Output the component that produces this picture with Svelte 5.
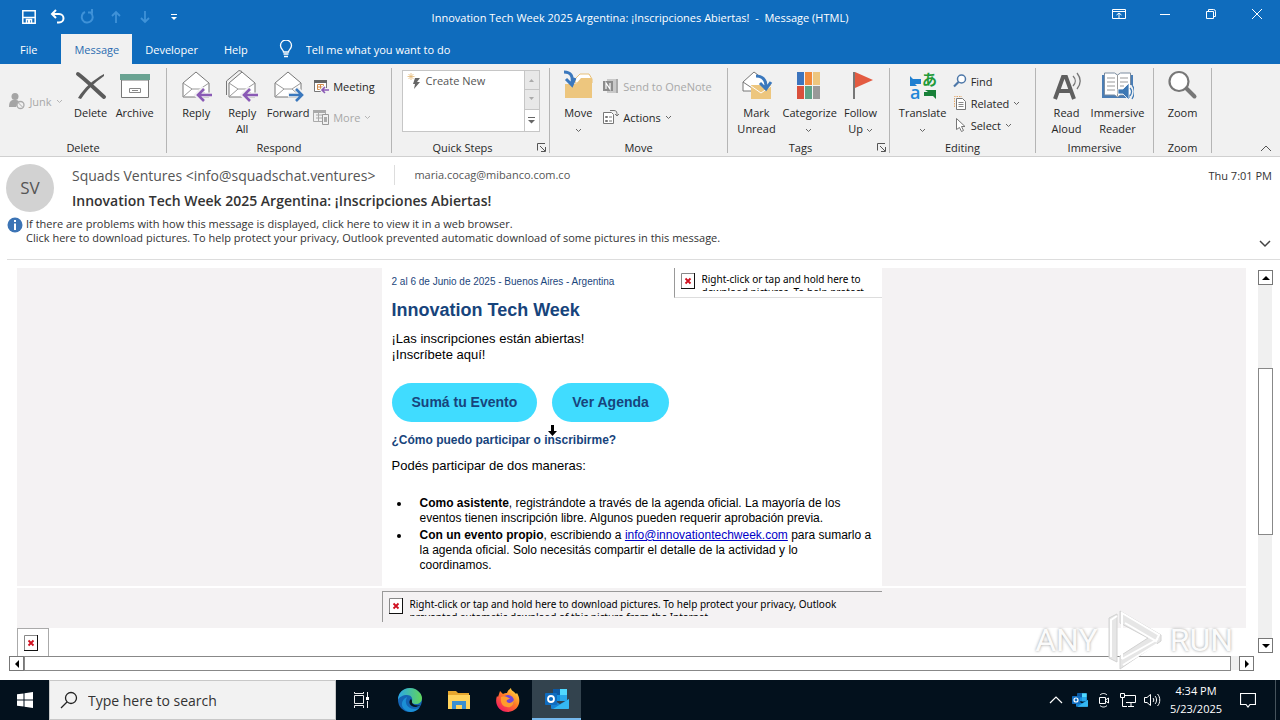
<script lang="ts">
  const tabs = ["File", "Message", "Developer", "Help"];
  let activeTab = $state("Message");
  let tellMe = $state("");
  let query = $state("");

  const message = {
    initials: "SV",
    from: "Squads Ventures <info@squadschat.ventures>",
    to: "maria.cocag@mibanco.com.co",
    subject: "Innovation Tech Week 2025 Argentina: ¡Inscripciones Abiertas!",
    received: "Thu 7:01 PM",
  };
</script>

{#snippet caret()}
  <svg class="caret" width="7" height="5" viewBox="0 0 7 5"><path d="M1 1l2.5 2.5L6 1" fill="none" stroke="currentColor" /></svg>
{/snippet}

{#snippet launcher()}
  <svg class="launcher" width="9" height="9" viewBox="0 0 9 9"><path d="M.5 7.500V.5H8M3 3l5 5M8.500 4v4.500H4" fill="none" stroke="#555" /></svg>
{/snippet}

{#snippet broken()}
  <svg class="broken" width="14" height="16" viewBox="0 0 14 16">
    <path d="M.5 15V.5H13" fill="none" stroke="#888" />
    <path d="M1 1h12v14H1z" fill="#fff" />
    <path d="M0 15.500h14M13.500 0v16" stroke="#111" />
    <path d="M4.500 5.500l5 5M9.500 5.500l-5 5" stroke="#d01020" stroke-width="1.800" />
  </svg>
{/snippet}

{#snippet outlook(size: number)}
  <svg width={size} height={size} viewBox="0 0 24 24">
    <path d="M8 2h14v12H8z" fill="#1490df" /><path d="M15 2h7v6h-7z" fill="#50d9ff" /><path d="M8 2h7v6H8z" fill="#0c59a4" />
    <path d="M15 8h7v6h-7z" fill="#28a8ea" /><path d="M6 12l9 5 9-5v9a1 1 0 0 1-1 1H7a1 1 0 0 1-1-1z" fill="#1683d3" /><path d="M24 12v9a1 1 0 0 1-1 1H8z" fill="#35b8f1" />
    <rect y="6" width="12" height="12" rx="1" fill="#0f6cbf" /><circle cx="6" cy="12" r="3" fill="none" stroke="#fff" stroke-width="1.800" />
  </svg>
{/snippet}

{#snippet envelope()}
  <path d="M3 13L16 2l13 11v14H3z" fill="#fff" stroke="#777" /><path d="M3 13l9 6h8l9-6M4 26l8-7M28 26l-8-7" fill="none" stroke="#999" />
{/snippet}

<div class="window">
  <header class="titlebar">
    <div class="quick">
      <button aria-label="Save"><svg width="16" height="16" viewBox="0 0 16 16"><path d="M1.800 1.800h12.400v12.400H1.800zM2 8.500h12M5.500 14v-3.500h5V14" fill="none" stroke="#fff" stroke-width="1.500" /><path d="M7 11h2v3H7z" fill="#fff" /></svg></button>
      <button aria-label="Undo"><svg width="16" height="16" viewBox="0 0 16 16"><path d="M6 1L2 5l4 4M2.500 5H9c6 0 6 8.500 0 8.500H7" fill="none" stroke="#fff" stroke-width="2" /></svg></button>
      <button class="dim" aria-label="Redo"><svg width="16" height="16" viewBox="0 0 16 16"><path d="M9 3.500h4V0M12 4a5.500 5.500 0 1 1-6-1" fill="none" stroke="currentColor" stroke-width="2" /></svg></button>
      <button class="dim" aria-label="Previous item"><svg width="16" height="16" viewBox="0 0 16 16"><path d="M8 14V3M4 7l4-4 4 4" fill="none" stroke="currentColor" stroke-width="1.800" /></svg></button>
      <button class="dim" aria-label="Next item"><svg width="16" height="16" viewBox="0 0 16 16"><path d="M8 2v11M4 9l4 4 4-4" fill="none" stroke="currentColor" stroke-width="1.800" /></svg></button>
      <button aria-label="Customize toolbar"><svg width="16" height="16" viewBox="0 0 16 16"><path d="M5 5.500h6" stroke="#fff" /><path d="M5 8h6l-3 3z" fill="#fff" /></svg></button>
    </div>
    <h1>{message.subject}&nbsp; -&nbsp; Message (HTML)</h1>
    <div class="controls">
      <button aria-label="Ribbon display options"><svg width="14" height="12" viewBox="0 0 14 12"><path d="M.5 1.500h13v9H.5zM.5 3.500h13M7 10V5M4.500 7L7 5l2.500 2" fill="none" stroke="#fff" /></svg></button>
      <button aria-label="Minimize"><svg width="12" height="12" viewBox="0 0 12 12"><path d="M1 6.500h10" stroke="#fff" /></svg></button>
      <button aria-label="Restore"><svg width="12" height="12" viewBox="0 0 12 12"><path d="M1.500 3.500h7v7h-7zM3.500 3V1.500h5a2 2 0 0 1 2 2v5H9" fill="none" stroke="#fff" /></svg></button>
      <button aria-label="Close"><svg width="12" height="12" viewBox="0 0 12 12"><path d="M1 1l10 10M11 1L1 11" stroke="#fff" /></svg></button>
    </div>
  </header>

  <nav class="tabs">
    {#each tabs as tab}
      <button class:active={tab === activeTab} onclick={() => (activeTab = tab)}>{tab}</button>
    {/each}
    <label class="tell">
      <svg width="14" height="18" viewBox="0 0 14 18"><path d="M4.500 12c0-2-3-3-3-6.500a5.500 5.500 0 0 1 11 0c0 3.500-3 4.500-3 6.500zM4.500 14h5M5 16.500h4" fill="none" stroke="#fff" stroke-width="1.300" /></svg>
      <input bind:value={tellMe} placeholder="Tell me what you want to do" aria-label="Tell me what you want to do" />
    </label>
  </nav>

  <div class="ribbon">
    <section>
      <div class="tools">
        <button class="small junk" disabled>
          <svg width="16" height="18" viewBox="0 0 16 18"><circle cx="6" cy="4.500" r="3.500" fill="#a5a5a5" /><path d="M0 15c0-7 3-7 6-7 2 0 3 0 4 2l-3 5z" fill="#a5a5a5" /><circle cx="11.500" cy="13" r="3.500" fill="#f1f1f1" stroke="#aaa" stroke-width="1.300" /><path d="M9 10.500l5 5" stroke="#aaa" /></svg>
          Junk {@render caret()}
        </button>
        <button class="big w44">
          <svg width="32" height="32" viewBox="0 0 32 32"><path d="M3 4c8 6 16 14 26 23" fill="none" stroke="#5b5b5b" stroke-width="4" stroke-linecap="round" /><path d="M29 4C18 10 9 18 3 28l3 1C12 20 19 13 29 6z" fill="#5b5b5b" /></svg>
          Delete
        </button>
        <button class="big w44">
          <svg width="32" height="32" viewBox="0 0 32 32"><path d="M2.500 10h27v17.500h-27z" fill="#fff" stroke="#777" /><path d="M1 4h30v6H1z" fill="#6aa392" /><path d="M10.500 18.500h11v4h-11zM13 20.500h6" fill="none" stroke="#888" /></svg>
          Archive
        </button>
      </div>
      <h2>Delete</h2>
    </section>

    <section>
      <div class="tools">
        <button class="big w46">
          <svg width="32" height="32" viewBox="0 0 32 32">{@render envelope()}<path d="M32 25H18M24 18l-7 7 7 7" fill="none" stroke="#f1f1f1" stroke-width="5" /><path d="M32 25H18M24 19l-6 6 6 6" fill="none" stroke="#8a5ab5" stroke-width="2.600" /></svg>
          Reply
        </button>
        <button class="big w46">
          <svg width="32" height="32" viewBox="0 0 32 32"><path d="M.5 25V11L13 .5l3 1" fill="none" stroke="#777" />{@render envelope()}<path d="M32 25H18M24 18l-7 7 7 7" fill="none" stroke="#f1f1f1" stroke-width="5" /><path d="M32 25H18M24 19l-6 6 6 6" fill="none" stroke="#8a5ab5" stroke-width="2.600" /></svg>
          Reply<br />All
        </button>
        <button class="big w46">
          <svg width="32" height="32" viewBox="0 0 32 32">{@render envelope()}<path d="M16 25h14M24 18l7 7-7 7" fill="none" stroke="#f1f1f1" stroke-width="5" /><path d="M17 25h13M24 19l6 6-6 6" fill="none" stroke="#3b78bd" stroke-width="2.600" /></svg>
          Forward
        </button>
        <div class="stack two">
          <button class="small">
            <svg width="16" height="16" viewBox="0 0 16 16"><path d="M1.500 2.500h12v11h-12z" fill="#fff" stroke="#777" /><path d="M1 2h13v3H1z" fill="#666" /><path d="M4.500 6.500h6v5h-6zM7.500 6v6M4 9h7" fill="none" stroke="#d38b4a" /><path d="M16 12H9M12 9l-3 3 3 3" fill="none" stroke="#f1f1f1" stroke-width="4" /><path d="M16 12H9M12 9l-3 3 3 3" fill="none" stroke="#8a5ab5" stroke-width="1.600" /></svg>
            Meeting
          </button>
          <button class="small" disabled>
            <svg width="16" height="16" viewBox="0 0 16 16"><path d="M.5 1.500h12v11H.5zM3 6h7M3 9h7M5.500 4v8" fill="none" stroke="#aaa" /><path d="M0 1h13v3H0z" fill="#aaa" /><path d="M9.500 5.500h6v10h-6z" fill="#f1f1f1" stroke="#999" /><path d="M11 8h3v5h-3z" fill="#aaa" /></svg>
            More {@render caret()}
          </button>
        </div>
      </div>
      <h2>Respond</h2>
    </section>

    <section class="launch">
      <div class="tools">
        <div class="gallery">
          <button class="create">
            <svg width="16" height="18" viewBox="0 0 16 18"><path d="M8 5h5l-3 4h3l-6 7 1-5H6z" fill="#666" /><path d="M4 0v7M.5 3.500h7M1.500 1l5 5M6.500 1l-5 5" stroke="#e3b977" stroke-width=".8" /></svg>
            Create New
          </button>
          <div class="spin">
            <button aria-label="Previous row" disabled><svg width="7" height="4" viewBox="0 0 7 4"><path d="M1 4h5L3.500 1z" fill="#aaa" /></svg></button>
            <button aria-label="Next row" disabled><svg width="7" height="4" viewBox="0 0 7 4"><path d="M1 0h5L3.500 3z" fill="#aaa" /></svg></button>
            <button aria-label="More quick steps"><svg width="7" height="7" viewBox="0 0 7 7"><path d="M0 .5h7" stroke="#666" /><path d="M0 3h7L3.500 6.500z" fill="#666" /></svg></button>
          </div>
        </div>
      </div>
      <h2>Quick Steps</h2>
      {@render launcher()}
    </section>

    <section>
      <div class="tools">
        <button class="big w46">
          <svg width="32" height="32" viewBox="0 0 32 32"><path d="M13 9l5-5h9l3 5v4H13z" fill="#fff" stroke="#e7bf78" /><path d="M3 14h11l5-6h11v20H3z" fill="#edc67e" /><path d="M2 2c7 0 9 4 8 11M4 9l6 6 3-7" fill="none" stroke="#3b78bd" stroke-width="3" /></svg>
          Move<br />{@render caret()}
        </button>
        <div class="stack two">
          <button class="small" disabled>
            <svg width="16" height="16" viewBox="0 0 16 16"><path d="M4 1h11v14H4z" fill="#c9c9c9" /><path d="M13 1h2v14h-2z" fill="#aaa" /><path d="M0 3h10v10H0z" fill="#8c8c8c" /><path d="M3 11V5l4 6V5" fill="none" stroke="#fff" stroke-width="1.200" /></svg>
            Send to OneNote
          </button>
          <button class="small">
            <svg width="16" height="16" viewBox="0 0 16 16"><path d="M.5 3.500h8l2 2v9H.5z" fill="#fff" stroke="#777" /><path d="M2.500 7.500h2v1h-2zM6 8h3M2.500 11.500h2v1h-2zM6 12h3M7 1.500h4c3 0 3 2 3 5M12 5l2 2 2-2" fill="none" stroke="#777" /></svg>
            Actions {@render caret()}
          </button>
        </div>
      </div>
      <h2>Move</h2>
    </section>

    <section class="launch">
      <div class="tools">
        <button class="big w52">
          <svg width="32" height="32" viewBox="0 0 32 32"><path d="M2 12L13 2l12 9v10H2z" fill="#fff" stroke="#777" /><path d="M2 12l9 6" stroke="#777" /><path d="M10 15h20v14H10z" fill="#edc67e" /><path d="M10 16l10 7 10-7" fill="none" stroke="#fff" /><path d="M15 6c7 0 10 4 10 11M19 13l6 6 5-7" fill="none" stroke="#3b78bd" stroke-width="3" /></svg>
          Mark<br />Unread
        </button>
        <button class="big w52">
          <svg width="32" height="32" viewBox="0 0 32 32"><path d="M4 2h7v13H4z" fill="#3c74bd" /><path d="M12 2h7v13h-7z" fill="#f0893b" /><path d="M20 2h7v13h-7z" fill="#edc67e" /><path d="M4 16h7v13H4z" fill="#d9503c" /><path d="M12 16h7v13h-7z" fill="#5fa287" /><path d="M20 16h7v13h-7z" fill="#999" /></svg>
          Categorize<br />{@render caret()}
        </button>
        <button class="big w52">
          <svg width="32" height="32" viewBox="0 0 32 32"><path d="M9 2v27" stroke="#777" stroke-width="2" /><path d="M10 2l18 8-18 8z" fill="#e35b41" /></svg>
          Follow<br />Up {@render caret()}
        </button>
      </div>
      <h2>Tags</h2>
      {@render launcher()}
    </section>

    <section>
      <div class="tools">
        <button class="big w56">
          <svg class="open" width="32" height="32" viewBox="0 0 32 32">
            <path d="M3 6l3 3h8v5H8l2 2H3z" fill="#1f7fd0" /><path d="M18 20h11v9l-3-3h-9v-4h4z" fill="#188038" />
            <text x="3" y="29" font-size="18" font-weight="600" fill="#1f87d8">a</text>
            <text x="15" y="15" font-size="15" font-weight="700" fill="#219a38" font-family="Noto Sans CJK JP, sans-serif">あ</text>
          </svg>
          Translate<br />{@render caret()}
        </button>
        <div class="stack">
          <button class="small">
            <svg width="14" height="16" viewBox="0 0 14 16"><circle cx="8.500" cy="6" r="4" fill="#fff" stroke="#4d77a8" stroke-width="1.500" /><path d="M5.500 9L1 13.500" stroke="#4d77a8" stroke-width="2.200" /></svg>
            Find
          </button>
          <button class="small">
            <svg width="14" height="16" viewBox="0 0 14 16"><path d="M1.500 12V1.500H9" fill="none" stroke="#e3a769" stroke-dasharray="1.500 1" /><path d="M3.500 3.500h6l3 3v8h-9z" fill="#fff" stroke="#777" /><path d="M5.500 7.500h5M5.500 9.500h5M5.500 11.500h5" stroke="#888" /></svg>
            Related {@render caret()}
          </button>
          <button class="small">
            <svg width="14" height="16" viewBox="0 0 14 16"><path d="M3.500 1.500v11l3-2 2 4 2-1-2-4h3.500z" fill="#fff" stroke="#777" /></svg>
            Select {@render caret()}
          </button>
        </div>
      </div>
      <h2>Editing</h2>
    </section>

    <section>
      <div class="tools">
        <button class="big w46">
          <svg width="32" height="32" viewBox="0 0 32 32"><path d="M4 29l8-22h3l8 22M7 21h13" fill="none" stroke="#5f5f5f" stroke-width="4" /><path d="M22 6c3 3 3 7 0 10M26 3c4 5 4 11 0 16" fill="none" stroke="#777" stroke-width="1.300" /></svg>
          Read<br />Aloud
        </button>
        <button class="big w56">
          <svg width="32" height="32" viewBox="0 0 32 32"><path d="M0 5h31v23H0z" fill="#4a7db5" /><path d="M2.500 3h10l3 2 3-2h10v22h-10l-3 2-3-2h-10z" fill="#fff" stroke="#7a8ca0" /><path d="M15.500 5v21M5 8h8M5 12h8M5 16h8M5 20h8M18 8h8M18 12h8M18 16h4" stroke="#999" /><path d="M16 19h5l6-6v17l-6-6h-5z" fill="#3d78b4" stroke="#fff" stroke-width=".8" /><path d="M28 15h4v14h-4z" fill="#f1f1f1" /><path d="M28 18c2 2 2 5 0 8M30 15c3 4 3 9 0 14" fill="none" stroke="#3d78b4" stroke-width="1.200" /></svg>
          Immersive<br />Reader
        </button>
      </div>
      <h2>Immersive</h2>
    </section>

    <section>
      <div class="tools">
        <button class="big w56">
          <svg width="32" height="32" viewBox="0 0 32 32"><circle cx="12" cy="11.500" r="9.500" fill="#fff" stroke="#777" stroke-width="2.200" /><path d="M19.500 18.500l8 8" stroke="#777" stroke-width="4" stroke-linecap="round" /></svg>
          Zoom
        </button>
      </div>
      <h2>Zoom</h2>
    </section>
    <button class="collapse" aria-label="Collapse ribbon"><svg width="12" height="7" viewBox="0 0 12 7"><path d="M1 6l5-5 5 5" fill="none" stroke="#555" /></svg></button>
  </div>

  <div class="head">
    <div class="avatar">{message.initials}</div>
    <div class="who">
      <div class="from"><span>{message.from}</span><small>{message.to}</small></div>
      <h3>{message.subject}</h3>
    </div>
    <time>{message.received}</time>
  </div>
  <div class="info">
    <svg width="16" height="16" viewBox="0 0 16 16"><circle cx="8" cy="8" r="7.500" fill="#3c74b5" /><path d="M7 3h2v2H7zM7 6.500h2V13H7z" fill="#fff" /></svg>
    <p>
      If there are problems with how this message is displayed, click here to view it in a web browser.<br />
      Click here to download pictures. To help protect your privacy, Outlook prevented automatic download of some pictures in this message.
    </p>
    <button aria-label="Expand header"><svg width="12" height="8" viewBox="0 0 12 8"><path d="M1 1l5 5 5-5" fill="none" stroke="#444" stroke-width="1.500" /></svg></button>
  </div>

  <main>
    <div class="view">
      <div class="mail">
        <article>
          <div class="blocked top">{@render broken()}<p>Right-click or tap and hold here to download pictures. To help protect</p></div>
          <p class="date">2 al 6 de Junio de 2025 - Buenos Aires - Argentina</p>
          <h4>Innovation Tech Week</h4>
          <p class="lead">¡Las inscripciones están abiertas!<br />¡Inscríbete aquí!</p>
          <div class="actions">
            <a href="#evento">Sumá tu Evento</a>
            <a href="#agenda">Ver Agenda</a>
            <svg class="pointer" width="9" height="11" viewBox="0 0 9 11"><path d="M3 0h3v6h3L4.500 11 0 6h3z" /></svg>
          </div>
          <h5>¿Cómo puedo participar o inscribirme?</h5>
          <p class="lead">Podés participar de dos maneras:</p>
          <ul>
            <li><b>Como asistente</b>, registrándote a través de la agenda oficial. La mayoría de los<br />eventos tienen inscripción libre. Algunos pueden requerir aprobación previa.</li>
            <li><b>Con un evento propio</b>, escribiendo a <a href="mailto:info@innovationtechweek.com">info@innovationtechweek.com</a> para sumarlo a<br />la agenda oficial. Solo necesitás compartir el detalle de la actividad y lo<br />coordinamos.</li>
          </ul>
        </article>
      </div>
      <div class="mail footer">
        <div class="blocked">{@render broken()}<p>Right-click or tap and hold here to download pictures. To help protect your privacy, Outlook prevented automatic download of this picture from the Internet.</p></div>
      </div>
      <div class="pixel">{@render broken()}</div>
    </div>
    <div class="vbar">
      <button aria-label="Scroll up"><svg width="8" height="4" viewBox="0 0 8 4"><path d="M0 4h8L4 0z" /></svg></button>
      <div class="track"><div class="thumb"></div></div>
      <button aria-label="Scroll down"><svg width="8" height="4" viewBox="0 0 8 4"><path d="M0 0h8L4 4z" /></svg></button>
    </div>
    <div class="hbar">
      <button aria-label="Scroll left"><svg width="4" height="8" viewBox="0 0 4 8"><path d="M4 0v8L0 4z" /></svg></button>
      <div class="thumb"></div>
      <button aria-label="Scroll right"><svg width="4" height="8" viewBox="0 0 4 8"><path d="M0 0v8l4-4z" /></svg></button>
    </div>
    <div class="watermark">
      <span>ANY</span>
      <svg width="58" height="62" viewBox="0 0 58 62"><path d="M4 9l8-4v48l-8-4zM15 2l41 24v6L15 60V47l28-18-28-15z" fill="#e6e6e6" stroke="#d2d2d2" /><path d="M6 48V11l6-4M17 50V4l37 22-3 6-31-18M17 50l36-20M18 56l34-21" fill="none" stroke="#fff" stroke-width="2" /><path d="M19 20l20 10-20 13z" fill="#fff" /></svg>
      <span>RUN</span>
    </div>
  </main>

  <footer class="taskbar">
    <button aria-label="Start"><svg width="16" height="16" viewBox="0 0 16 16"><path d="M0 2.300L6.500 1.400V7.500H0zM7.500 1.200L16 0v7.500H7.500zM0 8.500h6.500v6.100L0 13.700zM7.500 8.500H16V16l-8.500-1.200z" fill="#fff" /></svg></button>
    <label class="search">
      <svg width="18" height="18" viewBox="0 0 18 18"><circle cx="11" cy="7" r="5.500" fill="none" stroke="#222" stroke-width="1.300" /><path d="M7 11l-6 6" stroke="#222" stroke-width="1.300" /></svg>
      <input bind:value={query} placeholder="Type here to search" aria-label="Type here to search" />
    </label>
    <button aria-label="Task view"><svg width="18" height="18" viewBox="0 0 18 18"><path d="M2.500 4.500h9v8h-9zM2.500 1v1.500h9V1M2.500 17v-2.500h9V17M15.500 1v5M15.500 10v7" fill="none" stroke="#eee" /><path d="M14 6h3v3h-3z" fill="#fff" /></svg></button>
    <button aria-label="Edge">
      <svg width="24" height="24" viewBox="0 0 24 24">
        <defs><linearGradient id="edge-a" x2="1"><stop stop-color="#2aa7e8" /><stop offset="1" stop-color="#62d65a" /></linearGradient></defs>
        <circle cx="12" cy="12" r="12" fill="#1464b4" /><path d="M0 12C0 4 6 0 12 0s12 5 12 10c0 4-3 6-6 6-3 0-5-1-4-3 1-3-1-6-5-6-4 0-8 2-9 5z" fill="url(#edge-a)" />
        <path d="M8 12c-1 5 3 9 9 9 2 0 4-1 5-2-3 5-11 7-16 2-4-4-2-10 3-12z" fill="#1b8fd6" /><path d="M13 11c-3 2-2 8 5 8l5-2c-4 1-9 0-9-3 0-1 0-2-1-3z" fill="#06131f" />
      </svg>
    </button>
    <button aria-label="File Explorer"><svg width="22" height="20" viewBox="0 0 22 20"><path d="M0 1h8l2 2h11v16H0z" fill="#e6a72e" /><path d="M0 5h22v14H0z" fill="#ffd35c" /><path d="M4 19v-8h14v8h-4v-4H8v4z" fill="#3a8fd0" /></svg></button>
    <button aria-label="Firefox">
      <svg width="24" height="24" viewBox="0 0 24 24">
        <defs><linearGradient id="fox" x1="1" x2=".2" y2="1"><stop stop-color="#fff04a" /><stop offset=".5" stop-color="#ff7b24" /><stop offset="1" stop-color="#f31464" /></linearGradient></defs>
        <path d="M4 3l3 3c1-1 3-1 4-1 1-3 3-4 4-5 0 3 3 3 5 6l1-1c5 8 2 18-9 19C3 24-2 16 1 8l1 1z" fill="url(#fox)" /><circle cx="12" cy="13" r="6" fill="#7046d8" /><path d="M5 9c4-2 7 0 9 2-3 0-4 2-3 3 2 2 5 1 7-2 0 6-4 8-7 7-4 0-7-4-6-10z" fill="#ff9b2c" />
      </svg>
    </button>
    <button class="running" aria-label="Outlook">{@render outlook(24)}</button>
    <div class="tray">
      <button aria-label="Show hidden icons"><svg width="14" height="8" viewBox="0 0 14 8"><path d="M1 7l6-6 6 6" fill="none" stroke="#fff" stroke-width="1.200" /></svg></button>
      <button aria-label="Outlook status">{@render outlook(16)}</button>
      <button aria-label="Meet now"><svg width="14" height="16" viewBox="0 0 14 16"><path d="M2.500 5.500h6v6h-6zM8.500 8l3-2v5l-3-2M3 3c2-2 5-2 7 0M3 13.500c2 2 5 2 7 0" fill="none" stroke="#fff" /></svg></button>
      <button aria-label="Network"><svg width="16" height="14" viewBox="0 0 16 14"><path d="M5 2.500h10.500v7H6M11 10v3M8 13.500h6M.5 .5h4v4h-4zM2.500 5v8.500H7" fill="none" stroke="#fff" /></svg></button>
      <button aria-label="Volume"><svg width="17" height="14" viewBox="0 0 17 14"><path d="M.5 4.500H3l3.500-3v11L3 9.500H.5zM9 5c1 1 1 3 0 4M11 3c2 2 2 6 0 8M13.500 1c3 3 3 9 0 12" fill="none" stroke="#fff" /></svg></button>
      <div class="clock">4:34 PM<br />5/23/2025</div>
      <button class="notes" aria-label="Notifications"><svg width="16" height="16" viewBox="0 0 16 16"><path d="M.5 1.500h15v11H10L8 15l-2-2.500H.5z" fill="none" stroke="#fff" stroke-width="1.200" /></svg></button>
    </div>
  </footer>
</div>

<style>
  :global(body) {
    margin: 0;
  }
  .window {
    display: flex;
    flex-direction: column;
    height: 100vh;
    min-height: 600px;
    overflow: hidden;
    background: #fff;
    color: #333;
    font-family: "Open Sans", "Noto Sans", sans-serif;
    font-size: 11px;
  }
  h1,
  h2,
  h3,
  h4,
  h5,
  p,
  ul {
    margin: 0;
    padding: 0;
    font-weight: 400;
  }
  button,
  input {
    padding: 0;
    border: none;
    background: none;
    color: inherit;
    font: inherit;
  }
  svg {
    flex-shrink: 0;
  }

  .titlebar {
    display: grid;
    grid-template-columns: 1fr auto 1fr;
    align-items: center;
    height: 34px;
    background: #0f6cbd;
    color: #fff;
  }
  .quick {
    display: flex;
    gap: 13px;
    padding-left: 21px;
  }
  .quick button {
    display: flex;
  }
  .dim {
    color: #3f92d8;
  }
  h1 {
    font-size: 11px;
  }
  .controls {
    display: flex;
    justify-content: flex-end;
    height: 30px;
    align-self: start;
  }
  .controls button {
    width: 46px;
  }

  .tabs {
    display: flex;
    height: 30px;
    background: #0f6cbd;
    color: #fff;
  }
  .tabs button {
    padding: 0 13px;
  }
  .tabs button:first-child {
    padding: 0 24px 0 20px;
  }
  .tabs button.active {
    background: #f1f1f1;
    color: #2b6cb0;
  }
  .tell {
    display: flex;
    align-items: center;
    gap: 13px;
    padding-left: 18px;
  }
  .tell input {
    width: 200px;
  }
  .tell input::placeholder {
    color: #fff;
    opacity: 1;
  }

  .ribbon {
    display: grid;
    grid-template-columns: 167px 225px 158px 178px 162px 146px 118px 58px 1fr;
    height: 92px;
    border-bottom: 1px solid #d0d0d0;
    background: #f1f1f1;
    color: #262626;
  }
  .ribbon section {
    position: relative;
    display: flex;
    flex-direction: column;
    justify-content: space-between;
    margin: 4px 0 3px;
    border-right: 1px solid #b5b5b5;
  }
  .ribbon h2 {
    font-size: 11px;
    line-height: 10px;
    text-align: center;
  }
  .launch h2 {
    padding-right: 16px;
  }
  .tools {
    display: flex;
    justify-content: center;
    align-items: flex-start;
    padding-top: 2px;
  }
  .big {
    display: block;
    line-height: 16px;
    text-align: center;
    white-space: nowrap;
  }
  .big > svg:first-child {
    display: block;
    margin: 0 auto 3px;
  }
  .big > .open {
    overflow: visible;
  }
  .w44 {
    width: 44px;
  }
  .w46 {
    width: 46px;
  }
  .w52 {
    width: 52px;
  }
  .w56 {
    width: 56px;
  }
  .caret {
    color: #666;
    vertical-align: middle;
  }
  .small {
    display: flex;
    align-items: center;
    gap: 4px;
    height: 22px;
    white-space: nowrap;
  }
  .small:disabled {
    color: #a8a8a8;
  }
  .small:disabled .caret {
    color: #b5b5b5;
  }
  .junk {
    margin: 20px 6px 0 0;
  }
  .stack {
    display: flex;
    flex-direction: column;
    padding: 0 10px 0 2px;
  }
  .two {
    gap: 9px;
    padding-top: 5px;
  }
  .launcher {
    position: absolute;
    right: 3px;
    bottom: 1px;
  }
  .gallery {
    display: flex;
    width: 136px;
    height: 60px;
    border: 1px solid #c6c6c6;
    background: #fff;
  }
  .create {
    display: flex;
    flex: 1;
    gap: 3px;
    align-self: flex-start;
    padding: 2px 4px;
    color: #555;
  }
  .spin {
    display: grid;
    width: 14px;
    border-left: 1px solid #c6c6c6;
  }
  .spin button {
    display: flex;
    align-items: center;
    justify-content: center;
  }
  .spin button:disabled {
    border-bottom: 1px solid #c6c6c6;
    background: #e8e8e8;
  }
  .collapse {
    justify-self: end;
    align-self: end;
    padding: 0 8px 1px;
  }

  .head {
    display: flex;
    height: 52px;
    padding: 7px 8px 0 6px;
  }
  .avatar {
    width: 48px;
    height: 48px;
    margin-right: 18px;
    border-radius: 50%;
    background: #d2d2d2;
    color: #555;
    font-size: 17px;
    line-height: 48px;
    text-align: center;
  }
  .who {
    flex: 1;
  }
  .from {
    display: flex;
    align-items: center;
    height: 22px;
    color: #555;
    font-size: 14px;
  }
  .from small {
    margin-left: 19px;
    padding-left: 19px;
    border-left: 1px solid #ddd;
    font-size: 11px;
    line-height: 20px;
  }
  h3 {
    font-size: 14px;
    font-weight: 600;
    line-height: 30px;
  }
  time {
    line-height: 24px;
  }
  .info {
    display: flex;
    gap: 3px;
    height: 42px;
    margin-left: 7px;
    padding-top: 1px;
    border-bottom: 1px solid #ddd;
  }
  .info p {
    flex: 1;
    line-height: 14px;
  }
  .info button {
    padding: 10px 9px 0 0;
  }

  main {
    position: relative;
    display: grid;
    flex: 1;
    grid-template-columns: 1fr 14px;
    grid-template-rows: 1fr 14px;
    gap: 0 12px;
    min-height: 0;
    padding: 8px 8px 10px 9px;
  }
  .view {
    margin-left: 8px;
    overflow: hidden;
    color: #000;
    font-family: "Liberation Sans", Arial, sans-serif;
  }
  .mail {
    display: grid;
    grid-template-columns: 1fr 500px 1fr;
    background: #f4f2f3;
  }
  article {
    position: relative;
    grid-column: 2;
    box-sizing: border-box;
    height: 318px;
    padding: 6px 10px 0;
    background: #fff;
    font-size: 12px;
  }
  .date {
    color: #1b467c;
    font-size: 10px;
    line-height: 16px;
  }
  h4 {
    padding: 8px 0 9px;
    color: #17447c;
    font-size: 18px;
    font-weight: 700;
    line-height: 24px;
  }
  .lead {
    font-size: 13px;
    line-height: 16px;
  }
  .actions {
    position: relative;
    display: flex;
    gap: 15px;
    padding: 20px 0 10px;
  }
  .actions a {
    padding: 0 20px;
    border-radius: 20px;
    background: #40dcff;
    color: #17447c;
    font-size: 14px;
    font-weight: 700;
    line-height: 39px;
    text-decoration: none;
  }
  .pointer {
    position: absolute;
    left: 156px;
    bottom: -4px;
  }
  h5 {
    padding-bottom: 10px;
    color: #17447c;
    font-size: 12px;
    font-weight: 700;
    line-height: 16px;
  }
  ul {
    padding: 22px 0 0 19px;
    line-height: 15px;
    white-space: nowrap;
  }
  li {
    padding: 0 0 2px 9px;
  }
  ul a {
    color: #0000c8;
  }
  .blocked {
    display: flex;
    gap: 7px;
    box-sizing: border-box;
    height: 31px;
    padding: 6px 6px 0;
    border: solid #999;
    border-width: 1px 0 0 1px;
    font-family: "Noto Sans", sans-serif;
    font-size: 10px;
  }
  .blocked p {
    height: 18px;
    overflow: hidden;
    line-height: 13px;
  }
  .top {
    position: absolute;
    top: 0;
    right: 0;
    width: 208px;
    height: 30px;
    padding-top: 5px;
    border-width: 0 0 1px 1px;
    border-bottom-color: #ddd;
  }
  .footer {
    height: 40px;
    margin-top: 2px;
  }
  .footer .blocked {
    grid-column: 2;
    margin-top: 3px;
  }
  .pixel {
    width: 24px;
    height: 28px;
    padding: 6px 0 0 6px;
    border: solid #aaa;
    border-width: 1px 1px 0;
  }

  .vbar {
    display: flex;
    flex-direction: column;
    margin: 2px 0 3px;
    background: #f0f0f0;
  }
  .vbar button,
  .hbar button {
    display: flex;
    align-items: center;
    justify-content: center;
    box-sizing: border-box;
    width: 15px;
    height: 15px;
    border: 1px solid #777;
    background: #fff;
  }
  .thumb {
    box-sizing: border-box;
    border: 1px solid #888;
    background: #fff;
  }
  .track {
    flex: 1;
    padding-top: 83px;
  }
  .track .thumb {
    width: 15px;
    height: 167px;
  }
  .hbar {
    display: flex;
    background: #f0f0f0;
    margin-right: -8px;
  }
  .hbar .thumb {
    flex: 1;
    height: 15px;
    margin-right: 8px;
  }
  .watermark {
    position: absolute;
    right: 47px;
    bottom: 9px;
    display: flex;
    align-items: center;
    gap: 7px;
    color: #fbfbfb;
    font-family: Roboto, "Open Sans", sans-serif;
    font-size: 32px;
    text-shadow: 0 0 3px #999;
    pointer-events: none;
  }

  .taskbar {
    display: flex;
    height: 40px;
    background: #03111d;
    color: #fff;
  }
  .taskbar > button {
    display: flex;
    align-items: center;
    justify-content: center;
    width: 49px;
  }
  .taskbar .running {
    box-sizing: border-box;
    border-bottom: 2px solid #76b9ed;
    background: #33434e;
  }
  .search {
    display: flex;
    align-items: center;
    gap: 10px;
    box-sizing: border-box;
    width: 287px;
    padding-left: 10px;
    border: 1px solid #c8c8c8;
    background: #f2f2f2;
    color: #333;
    font-size: 14px;
  }
  .search input {
    flex: 1;
  }
  .search input::placeholder {
    color: #333;
    opacity: 1;
  }
  .tray {
    display: flex;
    align-items: center;
    margin-left: auto;
  }
  .tray button {
    display: flex;
    align-items: center;
    justify-content: center;
    width: 24px;
    height: 40px;
  }
  .clock {
    width: 64px;
    font-size: 11px;
    line-height: 18px;
    text-align: center;
  }
  .tray .notes {
    width: 48px;
    margin-right: 4px;
    padding-right: 8px;
    box-sizing: border-box;
    border-right: 1px solid #46535c;
  }
</style>
